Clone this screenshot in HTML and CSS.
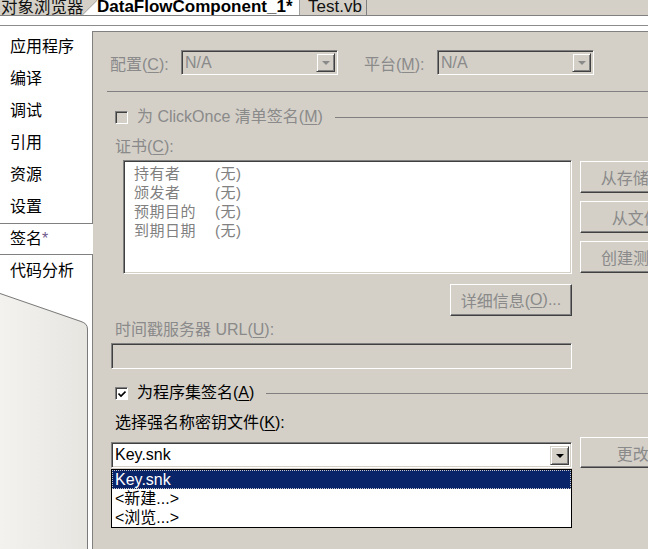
FILE: index.html
```html
<!DOCTYPE html>
<html lang="zh-CN">
<head>
<meta charset="utf-8">
<title>签名</title>
<link rel="stylesheet" href="styles.css">
</head>
<body>
<div class="tabstrip">
  <div class="tab tab-first">对象浏览器</div>
  <div class="tab tab-active">DataFlowComponent_1*</div>
  <div class="tab tab-test">Test.vb</div>
</div>
<div class="band"></div>
<div class="main">
  <div class="sidebar">
    <div class="nav-item">应用程序</div>
    <div class="nav-item">编译</div>
    <div class="nav-item">调试</div>
    <div class="nav-item">引用</div>
    <div class="nav-item">资源</div>
    <div class="nav-item">设置</div>
    <div class="nav-item selected">签名<span class="star">*</span></div>
    <div class="nav-item">代码分析</div>
    <svg class="shape" width="92" height="262" viewBox="0 0 92 262">
      <defs>
        <linearGradient id="g" x1="0" y1="0" x2="1" y2="0">
          <stop offset="0" stop-color="#f3f2ef"/>
          <stop offset="1" stop-color="#e6e5e0"/>
        </linearGradient>
      </defs>
      <path d="M0 6 L81 34 Q87.5 36 87.5 42 L87.5 262 L0 262 Z" fill="url(#g)"/>
      <path d="M0 6.5 L81 34.5 Q87.5 36.5 87.5 42 L87.5 262" fill="none" stroke="#7a7a7a" stroke-width="1"/>
    </svg>
  </div>
  <div class="panel">
    <div class="config-row">
      <span class="lbl dis lbl-config">配置(<u>C</u>):</span>
      <div class="combo sunken dis-bg combo-small">
        <span class="combo-text dis">N/A</span>
        <span class="combo-btn"><span class="arrow arrow-dis"></span></span>
      </div>
      <span class="lbl dis lbl-platform">平台(<u>M</u>):</span>
      <div class="combo sunken dis-bg combo-small">
        <span class="combo-text dis">N/A</span>
        <span class="combo-btn"><span class="arrow arrow-dis"></span></span>
      </div>
    </div>
    <div class="separator"></div>
    <div class="check-row">
      <span class="checkbox checkbox-dis"></span>
      <span class="check-label dis">为 ClickOnce 清单签名(<u>M</u>)</span>
      <span class="rule"></span>
    </div>
    <div class="field-label dis">证书(<u>C</u>):</div>
    <div class="cert-row">
      <div class="cert-box sunken">
        <div class="cert-line"><span class="cert-key">持有者</span><span>(无)</span></div>
        <div class="cert-line"><span class="cert-key">颁发者</span><span>(无)</span></div>
        <div class="cert-line"><span class="cert-key">预期目的</span><span>(无)</span></div>
        <div class="cert-line"><span class="cert-key">到期日期</span><span>(无)</span></div>
      </div>
      <div class="cert-buttons">
        <div class="btn wide dis">从存储区选择(<u>S</u>)...</div>
        <div class="btn wide dis">从文件选择(<u>I</u>)...</div>
        <div class="btn wide dis">创建测试证书(<u>T</u>)...</div>
      </div>
    </div>
    <div class="btn details dis">详细信息(<u>O</u>)...</div>
    <div class="field-label dis ts-label">时间戳服务器 URL(<u>U</u>):</div>
    <div class="textbox sunken dis-bg"></div>
    <div class="check-row assembly-row">
      <span class="checkbox checkbox-on">
        <svg width="8" height="8" viewBox="0 0 8 8"><path d="M0.5 3.5 L3 6 L7.5 1.5" fill="none" stroke="#000" stroke-width="1.6"/></svg>
      </span>
      <span class="check-label">为程序集签名(<u>A</u>)</span>
      <span class="rule"></span>
    </div>
    <div class="field-label key-label">选择强名称密钥文件(<u>K</u>):</div>
    <div class="key-row">
      <div class="key-wrap">
        <div class="combo sunken key-combo">
          <span class="combo-text">Key.snk</span>
          <span class="combo-btn"><span class="arrow"></span></span>
        </div>
        <div class="dropdown">
          <div class="dd-item dd-sel">Key.snk</div>
          <div class="dd-item">&lt;新建...&gt;</div>
          <div class="dd-item">&lt;浏览...&gt;</div>
        </div>
      </div>
      <div class="btn wide change dis">更改密码(<u>P</u>)...</div>
    </div>
  </div>
</div>
</body>
</html>
```
FILE: styles.css
```css
* { box-sizing: border-box; }
html, body { margin: 0; padding: 0; }
body {
  width: 648px;
  height: 549px;
  overflow: hidden;
  background: #fff;
  font-family: "Liberation Sans", "Noto Sans CJK SC", sans-serif;
  font-size: 16px;
  color: #000;
}
u { text-decoration: underline; text-underline-offset: 2px; }

.tabstrip {
  display: flex;
  height: 16px;
  background: #d4d0c8;
  border-bottom: 1px solid #808080;
  overflow: hidden;
  white-space: nowrap;
}
.tab { height: 15px; line-height: 14px; flex: none; }
.tab-first { width: 83px; padding-left: 1px; color: #111; font-size: 16.5px; }
.tab-active {
  margin-left: -1px;
  width: 216px;
  padding-left: 15px;
  font-weight: bold;
  font-size: 17px;
  background:
    linear-gradient(to bottom right, #fff calc(50% - 1px), #808080 50%, #fff calc(50% + 1px)) 0 0 / 15px 15px no-repeat,
    #fff;
  clip-path: polygon(0 100%, 15px 0, 100% 0, 100% 100%);
}
.tab-test {
  width: 69px;
  padding-left: 9px;
  font-size: 17px;
  border-left: 1px solid #fff;
  border-right: 1px solid #808080;
  box-shadow: inset 1px 0 0 #a0a0a0;
  color: #111;
}

.band {
  height: 10px;
  border-bottom: 1px solid #8c8c8c;
  margin-bottom: 5px;
}

.main {
  display: flex;
  height: 518px;
}
.sidebar {
  width: 92px;
  flex: none;
  display: flex;
  flex-direction: column;
}
.nav-item {
  height: 32px;
  line-height: 32px;
  padding-left: 10px;
  white-space: nowrap;
  flex: none;
}
.nav-item.selected {
  position: relative;
  z-index: 1;
  margin-right: -1px;
  background: #fff;
  border-top: 1px solid #808080;
  border-bottom: 1px solid #808080;
  line-height: 30px;
}
.star { color: #6e5a8c; }
.shape { display: block; flex: none; }

.panel {
  flex: 1;
  background: #d4d0c8;
  border-left: 1px solid #808080;
  border-top: 1px solid #808080;
  padding-left: 18px;
  display: flex;
  flex-direction: column;
  align-items: flex-start;
  overflow: hidden;
}
.dis { color: #8a8a8a; }
.dis-bg { background: #d4d0c8; }

.sunken {
  border-top: 1px solid #808080;
  border-left: 1px solid #808080;
  border-right: 1px solid #fff;
  border-bottom: 1px solid #fff;
  box-shadow: inset 1px 1px 0 #404040, inset -1px -1px 0 #d4d0c8;
}
.btn {
  background: #d4d0c8;
  border-top: 1px solid #fff;
  border-left: 1px solid #fff;
  border-right: 1px solid #404040;
  border-bottom: 1px solid #404040;
  box-shadow: inset -1px -1px 0 #808080;
  display: flex;
  align-items: center;
  justify-content: center;
  white-space: nowrap;
  flex: none;
}

.config-row {
  margin-top: 18px;
  height: 25px;
  display: flex;
  align-items: center;
}
.lbl { white-space: nowrap; }
.lbl-config { width: 71px; margin-left: -1px; }
.lbl-platform { width: 73px; margin-left: 26px; }
.combo {
  position: relative;
  display: flex;
  align-items: center;
  height: 25px;
}
.combo-small { width: 157px; }
.combo-text { padding-left: 3px; flex: 1; line-height: 20px; }
.combo-btn {
  width: 19px;
  height: 19px;
  margin-right: 2px;
  background: #d4d0c8;
  border-top: 1px solid #d4d0c8;
  border-left: 1px solid #d4d0c8;
  border-right: 1px solid #404040;
  border-bottom: 1px solid #404040;
  box-shadow: inset 1px 1px 0 #fff, inset -1px -1px 0 #808080;
  display: flex;
  align-items: center;
  justify-content: center;
}
.arrow {
  width: 0;
  height: 0;
  border-left: 4px solid transparent;
  border-right: 4px solid transparent;
  border-top: 4px solid #000;
  margin-top: 1px;
}
.arrow-dis { border-top-color: #8a8a8a; }

.separator {
  margin-top: 16px;
  margin-left: -4px;
  height: 1px;
  width: 560px;
  background: #808080;
  flex: none;
}

.check-row {
  margin-top: 16px;
  height: 18px;
  padding-left: 4px;
  display: flex;
  align-items: center;
  width: 540px;
  flex: none;
}
.checkbox {
  width: 13px;
  height: 13px;
  flex: none;
  display: flex;
  align-items: center;
  justify-content: center;
}
.checkbox-dis {
  border-top: 1px solid #808080;
  border-left: 1px solid #808080;
  border-right: 1px solid #fff;
  border-bottom: 1px solid #fff;
  box-shadow: inset 1px 1px 0 #404040;
  background: #d4d0c8;
}
.checkbox-on {
  border-top: 1px solid #808080;
  border-left: 1px solid #808080;
  border-right: 1px solid #fff;
  border-bottom: 1px solid #fff;
  box-shadow: inset 1px 1px 0 #404040;
  background: #fff;
}
.checkbox-on svg { display: block; margin: 1px 0 0 1px; }
.check-label { margin-left: 9px; white-space: nowrap; line-height: 18px; }
.rule {
  flex: 1;
  height: 1px;
  background: #808080;
  margin-left: 12px;
  margin-top: 1px;
}

.field-label {
  margin-top: 12px;
  padding-left: 4px;
  height: 18px;
  line-height: 18px;
  white-space: nowrap;
  flex: none;
}

.cert-row {
  margin-top: 4px;
  padding-left: 12px;
  display: flex;
  height: 114px;
  flex: none;
}
.cert-box {
  width: 449px;
  height: 114px;
  background: #fff;
  padding: 3px 10px;
  color: #808080;
  font-size: 15px;
  letter-spacing: 0.5px;
}
.cert-line {
  display: flex;
  height: 19px;
  line-height: 19px;
  white-space: nowrap;
}
.cert-key { width: 81px; }
.cert-buttons {
  margin-left: 8px;
  margin-top: 1px;
  display: flex;
  flex-direction: column;
  gap: 8px;
}
.wide { width: 172px; height: 32px; }

.details {
  margin-top: 10px;
  margin-left: 339px;
  width: 122px;
  height: 32px;
}
.ts-label { margin-top: 5px; }
.textbox {
  margin-top: 4px;
  width: 461px;
  height: 26px;
  flex: none;
}

.assembly-row { margin-top: 15px; }
.key-label { margin-top: 12px; }

.key-row {
  margin-top: 5px;
  display: flex;
  align-items: flex-end;
  flex: none;
}
.key-wrap {
  position: relative;
  width: 461px;
  height: 26px;
}
.key-combo {
  width: 461px;
  height: 26px;
  background: #fff;
}
.key-combo .combo-text { padding-left: 3px; }
.change { margin-left: 8px; height: 31px; }

.dropdown {
  position: absolute;
  left: 0;
  top: 27px;
  width: 461px;
  height: 59px;
  background: #fff;
  border: 1px solid #000;
  z-index: 2;
}
.dd-item {
  height: 19px;
  line-height: 19px;
  padding-left: 3px;
  white-space: nowrap;
}
.dd-sel {
  background: #0a246a;
  color: #fff;
  outline: 1px dotted #c8c8c8;
  outline-offset: -1px;
}
```
